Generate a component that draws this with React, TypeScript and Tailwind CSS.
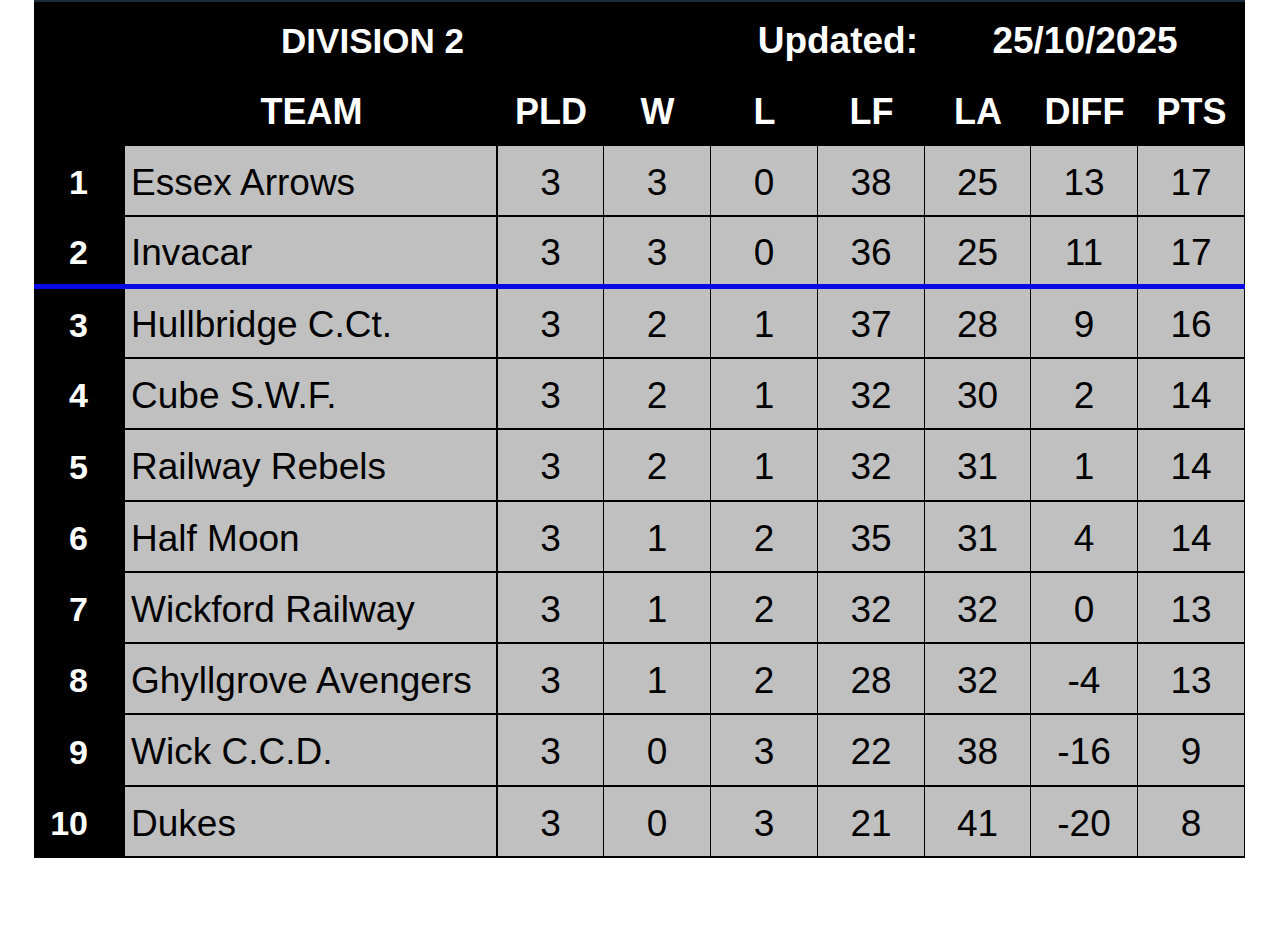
import React from 'react';

const teams = [
    { pos: 1, name: 'Essex Arrows', pld: 3, w: 3, l: 0, lf: 38, la: 25, diff: 13, pts: 17, h: 71 },
    { pos: 2, name: 'Invacar', pld: 3, w: 3, l: 0, lf: 36, la: 25, diff: 11, pts: 17, h: 72 },
    { pos: 3, name: 'Hullbridge C.Ct.', pld: 3, w: 2, l: 1, lf: 37, la: 28, diff: 9, pts: 16, h: 70 },
    { pos: 4, name: 'Cube S.W.F.', pld: 3, w: 2, l: 1, lf: 32, la: 30, diff: 2, pts: 14, h: 71 },
    { pos: 5, name: 'Railway Rebels', pld: 3, w: 2, l: 1, lf: 32, la: 31, diff: 1, pts: 14, h: 72 },
    { pos: 6, name: 'Half Moon', pld: 3, w: 1, l: 2, lf: 35, la: 31, diff: 4, pts: 14, h: 71 },
    { pos: 7, name: 'Wickford Railway', pld: 3, w: 1, l: 2, lf: 32, la: 32, diff: 0, pts: 13, h: 71 },
    { pos: 8, name: 'Ghyllgrove Avengers', pld: 3, w: 1, l: 2, lf: 28, la: 32, diff: -4, pts: 13, h: 71 },
    { pos: 9, name: 'Wick C.C.D.', pld: 3, w: 0, l: 3, lf: 22, la: 38, diff: -16, pts: 9, h: 72 },
    { pos: 10, name: 'Dukes', pld: 3, w: 0, l: 3, lf: 21, la: 41, diff: -20, pts: 8, h: 71 },
];

// stat column widths, left to right: PLD W L LF LA DIFF PTS
const statCols = [
    { key: 'pld', label: 'PLD', w: 'w-[106px]' },
    { key: 'w', label: 'W', w: 'w-[107px]' },
    { key: 'l', label: 'L', w: 'w-[107px]' },
    { key: 'lf', label: 'LF', w: 'w-[107px]' },
    { key: 'la', label: 'LA', w: 'w-[106px]' },
    { key: 'diff', label: 'DIFF', w: 'w-[107px]' },
    { key: 'pts', label: 'PTS', w: 'w-[107px]' },
] as const;

const App = () => {
    return (
        <div className="min-h-screen bg-white font-['Liberation_Sans',Arial,sans-serif]">
            <div className="ml-[34px] w-[1211px] bg-black border-t-2 border-[#1b2a38]">
                {/* Title row */}
                <div className="flex h-[76px] items-center text-white font-bold text-[37px] leading-none">
                    <div className="w-[677px] text-center text-[35px]">DIVISION 2</div>
                    <div className="w-[214px] text-right pr-[7px]">Updated:</div>
                    <div className="w-[320px] text-center whitespace-nowrap">25/10/2025</div>
                </div>

                {/* Column headings */}
                <div className="flex h-[68px] items-center text-white font-bold text-[36px] leading-none">
                    <div className="w-[91px]" />
                    <div className="w-[373px] text-center">TEAM</div>
                    {statCols.map((c) => (
                        <div key={c.key} className={`${c.w} text-center`}>{c.label}</div>
                    ))}
                </div>

                {/* Table rows */}
                {teams.map((t) => (
                    <div
                        key={t.pos}
                        className={`flex ${t.pos === 2 ? 'border-b-[5px] border-[#0a0ae6]' : 'border-b-2 border-black'}`}
                        style={{ height: t.h }}
                    >
                        <div className="w-[91px] flex items-center justify-end pt-[3px] pr-[37px] text-white font-bold text-[34px] leading-none">
                            {t.pos}
                        </div>
                        <div className="w-[373px] bg-[#c0c0c0] border-r-2 border-black flex items-center pt-[3px] pl-[6px] text-[37px] leading-none text-black">
                            {t.name}
                        </div>
                        {statCols.map((c) => (
                            <div
                                key={c.key}
                                className={`${c.w} bg-[#c0c0c0] border-r border-black flex items-center justify-center pt-[3px] text-[37px] leading-none text-black`}
                            >
                                {t[c.key]}
                            </div>
                        ))}
                    </div>
                ))}
            </div>
        </div>
    );
};

export default App;
